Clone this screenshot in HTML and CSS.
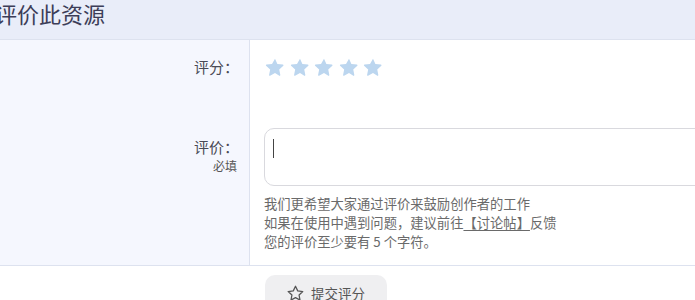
FILE: index.html
```html
<!DOCTYPE html>
<html lang="zh">
<head>
<meta charset="utf-8">
<link rel="stylesheet" href="styles.css">
</head>
<body>
<div class="page">
  <div class="header"><h2 class="title">评价此资源</h2></div>
  <div class="form">
    <div class="label-cell row1"><span class="label">评分：</span></div>
    <div class="field-cell row1">
      <div class="stars">
        <svg class="star" viewBox="0 0 24 24"><path d="M12 2.2l2.9 6.1 6.6.8c.7.1 1 1 .5 1.4l-4.9 4.6 1.3 6.6c.1.7-.6 1.2-1.2.9L12 19.3l-5.9 3.3c-.6.3-1.3-.2-1.2-.9l1.3-6.6L1.3 10.5c-.5-.5-.2-1.3.5-1.4l6.6-.8z"/></svg>
        <svg class="star" viewBox="0 0 24 24"><path d="M12 2.2l2.9 6.1 6.6.8c.7.1 1 1 .5 1.4l-4.9 4.6 1.3 6.6c.1.7-.6 1.2-1.2.9L12 19.3l-5.9 3.3c-.6.3-1.3-.2-1.2-.9l1.3-6.6L1.3 10.5c-.5-.5-.2-1.3.5-1.4l6.6-.8z"/></svg>
        <svg class="star" viewBox="0 0 24 24"><path d="M12 2.2l2.9 6.1 6.6.8c.7.1 1 1 .5 1.4l-4.9 4.6 1.3 6.6c.1.7-.6 1.2-1.2.9L12 19.3l-5.9 3.3c-.6.3-1.3-.2-1.2-.9l1.3-6.6L1.3 10.5c-.5-.5-.2-1.3.5-1.4l6.6-.8z"/></svg>
        <svg class="star" viewBox="0 0 24 24"><path d="M12 2.2l2.9 6.1 6.6.8c.7.1 1 1 .5 1.4l-4.9 4.6 1.3 6.6c.1.7-.6 1.2-1.2.9L12 19.3l-5.9 3.3c-.6.3-1.3-.2-1.2-.9l1.3-6.6L1.3 10.5c-.5-.5-.2-1.3.5-1.4l6.6-.8z"/></svg>
        <svg class="star" viewBox="0 0 24 24"><path d="M12 2.2l2.9 6.1 6.6.8c.7.1 1 1 .5 1.4l-4.9 4.6 1.3 6.6c.1.7-.6 1.2-1.2.9L12 19.3l-5.9 3.3c-.6.3-1.3-.2-1.2-.9l1.3-6.6L1.3 10.5c-.5-.5-.2-1.3.5-1.4l6.6-.8z"/></svg>
      </div>
    </div>
    <div class="label-cell row2">
      <span class="label">评价：</span>
      <span class="required">必填</span>
    </div>
    <div class="field-cell row2">
      <div class="textarea"><span class="caret"></span></div>
      <div class="help">
        <div>我们更希望大家通过评价来鼓励创作者的工作</div>
        <div>如果在使用中遇到问题，建议前往<a class="link">【讨论帖】</a>反馈</div>
        <div>您的评价至少要有 5 个字符。</div>
      </div>
    </div>
  </div>
  <div class="actions">
    <button class="submit">
      <svg class="btn-star" viewBox="0 0 24 24"><path d="M12 2.8l2.8 5.9 6.4.8-4.7 4.4 1.2 6.4L12 17.2l-5.7 3.1 1.2-6.4-4.7-4.4 6.4-.8z"/></svg>
      <span>提交评分</span>
    </button>
  </div>
</div>
</body>
</html>
```

FILE: styles.css
```css
html, body {
  margin: 0;
  padding: 0;
  background: #ffffff;
  overflow: hidden;
}
.page {
  width: 695px;
  height: 300px;
  overflow: hidden;
  font-family: "Noto Sans CJK SC", "Noto Sans", sans-serif;
  color: #444;
}
.header {
  height: 39px;
  background: #e9edf9;
  border-bottom: 1px solid #dde2ef;
}
.title {
  margin: 0 0 0 -5px;
  padding-top: 0;
  font-size: 22px;
  font-weight: 400;
  line-height: 26px;
  color: #3c3d58;
}
.form {
  display: grid;
  grid-template-columns: 250px 1fr;
  grid-template-rows: 65px auto;
  border-bottom: 1px solid #dde2ef;
}
.label-cell {
  background: #f5f7fe;
  border-right: 1px solid #dde2ef;
  display: flex;
  flex-direction: column;
  align-items: flex-end;
  padding-right: 10px;
}
.field-cell {
  padding-left: 14px;
}
.label-cell.row1 { padding-top: 17px; }
.field-cell.row1 { padding-top: 17px; }
.label {
  font-size: 15px;
  line-height: 20px;
  color: #4a4a55;
}
.required {
  font-size: 12px;
  line-height: 16px;
  color: #555;
  margin-right: 2px;
  margin-top: 1px;
}
.stars {
  display: flex;
  gap: 4.5px;
  padding-left: 1px;
}
.star {
  width: 20px;
  height: 20px;
  fill: #bcd6ef;
}
.label-cell.row2 { padding-top: 32px; }
.field-cell.row2 { padding-top: 23px; padding-bottom: 14px; }
.textarea {
  box-sizing: border-box;
  width: 520px;
  height: 58px;
  border: 1px solid #d9d9de;
  border-radius: 10px;
  background: #fff;
  padding: 10px 0 0 8px;
}
.caret {
  display: block;
  width: 1px;
  height: 19px;
  background: #444;
}
.help {
  margin-top: 8px;
  font-size: 13.3px;
  line-height: 19px;
  color: #6a6a6a;
}
.link {
  color: #6a6a6a;
  text-decoration: underline;
  text-underline-offset: 2px;
}
.actions {
  padding: 9px 0 0 265px;
}
.submit {
  display: flex;
  align-items: center;
  gap: 6px;
  width: 122px;
  height: 36px;
  border: none;
  border-radius: 10px;
  background: #efeff1;
  padding: 0 0 0 21px;
  font-family: inherit;
  font-size: 13.5px;
  color: #555;
}
.btn-star {
  width: 19px;
  height: 19px;
  fill: none;
  stroke: #555;
  stroke-width: 1.6;
  stroke-linejoin: round;
}
```
